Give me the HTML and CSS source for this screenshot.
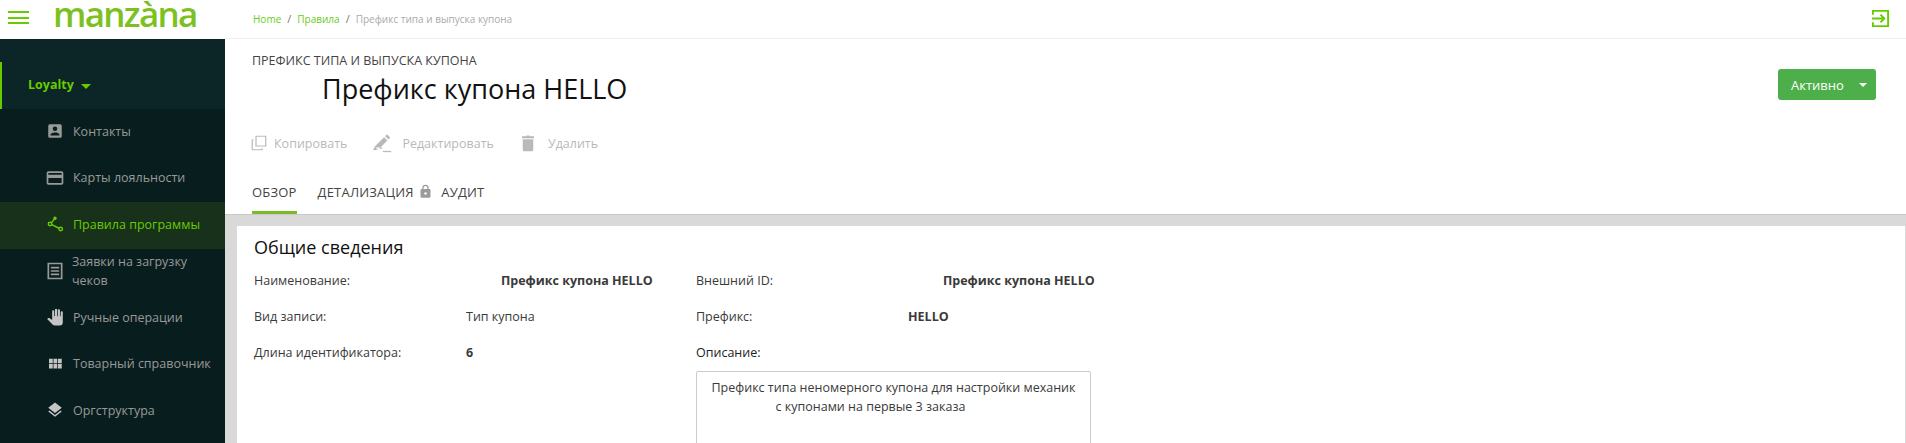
FILE: index.html
```html
<!DOCTYPE html>
<html lang="ru">
<head>
    <meta charset="UTF-8">
    <title>Префикс купона HELLO - Manzana</title>
    <link rel="stylesheet" href="styles.css">
</head>
<body>

    <!-- Sidebar -->
    <aside class="sidebar">
        <div class="brand">
            <div class="burger"><span></span><span></span><span></span></div>
            <div class="logo">manzàna</div>
        </div>
        <nav class="menu">
            <div class="menu-head">Loyalty <i class="caret"></i></div>
            <ul class="menu-list">
                <li class="menu-item">
                    <svg class="menu-icon small" viewBox="0 0 24 24"><path d="M3 5v14a2 2 0 0 0 2 2h14a2 2 0 0 0 2-2V5a2 2 0 0 0-2-2H5a2 2 0 0 0-2 2zm12 4a3 3 0 1 1-6 0 3 3 0 0 1 6 0zm-9 8c0-2 4-3.100 6-3.100s6 1.100 6 3.100v1H6v-1z"/></svg>
                    <span>Контакты</span>
                </li>
                <li class="menu-item">
                    <svg class="menu-icon" viewBox="0 0 24 24"><path d="M20 4H4a2 2 0 0 0-2 2v12a2 2 0 0 0 2 2h16a2 2 0 0 0 2-2V6a2 2 0 0 0-2-2zm0 14H4v-6h16v6zm0-10H4V6h16v2z"/></svg>
                    <span>Карты лояльности</span>
                </li>
                <li class="menu-item active">
                    <svg class="menu-icon smaller" viewBox="0 0 24 24" fill="none" stroke="currentColor" stroke-width="2"><circle cx="5" cy="12" r="2.500" fill="none"/><circle cx="12" cy="4" r="1.500"/><circle cx="20" cy="19" r="2.500" fill="none"/><path d="M7 10.500 11 5M7.500 13l10 5" fill="none"/></svg>
                    <span>Правила программы</span>
                </li>
                <li class="menu-item two-lines">
                    <svg class="menu-icon" viewBox="0 0 24 24"><path d="M3 2h18v20H3V2zm2 2v16h14V4H5zm2 3h10v2H7V7zm0 4h10v2H7v-2zm0 4h10v2H7v-2z"/></svg>
                    <span>Заявки на загрузку чеков</span>
                </li>
                <li class="menu-item">
                    <svg class="menu-icon smaller light" viewBox="0 0 24 24"><path d="M23 5.500V20c0 2.200-1.800 4-4 4h-7.300c-1.080 0-2.100-.43-2.850-1.190L1 14.830s1.260-1.230 1.300-1.250c.22-.19.490-.29.790-.29.220 0 .42.060.600.160.040.010 4.310 2.460 4.310 2.460V4c0-.83.670-1.500 1.500-1.500S11 3.170 11 4v7h1V1.500c0-.83.670-1.500 1.500-1.500S15 .67 15 1.500V11h1V2.500c0-.83.670-1.500 1.500-1.500s1.500.67 1.500 1.500V11h1V5.500c0-.83.670-1.500 1.500-1.500s1.500.67 1.500 1.500z"/></svg>
                    <span>Ручные операции</span>
                </li>
                <li class="menu-item">
                    <svg class="menu-icon small light" viewBox="0 0 24 24"><path d="M4 11h5V5H4v6zm0 7h5v-6H4v6zm6 0h5v-6h-5v6zm6 0h5v-6h-5v6zm-6-7h5V5h-5v6zm6-6v6h5V5h-5z"/></svg>
                    <span>Товарный справочник</span>
                </li>
                <li class="menu-item">
                    <svg class="menu-icon small light" viewBox="0 0 24 24"><path d="M11.990 18.540l-7.370-5.730L3 14.070l9 7 9-7-1.630-1.270-7.380 5.740zM12 16l7.360-5.730L21 9l-9-7-9 7 1.630 1.270L12 16z"/></svg>
                    <span>Оргструктура</span>
                </li>
            </ul>
        </nav>
    </aside>

    <main class="main">
        <!-- Top bar -->
        <div class="topbar">
            <div class="breadcrumbs">
                <a href="#">Home</a><em>/</em><a href="#">Правила</a><em>/</em><span>Префикс типа и выпуска купона</span>
            </div>
            <svg class="exit-icon" viewBox="0 0 20 20" fill="none" stroke="#66cc00" stroke-width="2"><path d="M2 6V2h16v16H2v-4"/><path d="M1 10h13M10 6l4 4-4 4"/></svg>
        </div>

        <!-- Page header -->
        <section class="page-head">
            <div class="head-row">
                <div>
                    <div class="record-type">Префикс типа и выпуска купона</div>
                    <h1>Префикс купона HELLO</h1>
                </div>
                <div class="status-btn"><span>Активно</span><i class="caret"></i></div>
            </div>
            <div class="actions">
                <div class="action">
                    <svg viewBox="0 0 24 24" fill="none" stroke="currentColor" stroke-width="1.600"><path d="M8 3h13v13H8z"/><path d="M5 8H3v13h13v-2"/></svg>
                    <span>Копировать</span>
                </div>
                <div class="action">
                    <svg viewBox="0 0 24 24" fill="currentColor"><path d="M2 17.500V21h.1l10.800-2.600-1-1zM3 16.500 14.500 5l4 4L7.500 20zM15.700 3.800l1.600-1.600a1 1 0 0 1 1.400 0l2.600 2.600a1 1 0 0 1 0 1.400l-1.600 1.600z"/><path d="M13 21.500h10v1.500H13z"/></svg>
                    <span>Редактировать</span>
                </div>
                <div class="action">
                    <svg viewBox="0 0 24 24" fill="currentColor"><path d="M5 7h14v14a2 2 0 0 1-2 2H7a2 2 0 0 1-2-2V7zM19 3h-4l-1-1h-4L9 3H4v2.500h16V3z"/></svg>
                    <span>Удалить</span>
                </div>
            </div>
            <div class="tabs">
                <div class="tab current">Обзор</div>
                <div class="tab">Детализация
                    <svg viewBox="0 0 24 24" fill="#9b9b9b"><path d="M18 8h-1V6A5 5 0 0 0 7 6v2H6a2 2 0 0 0-2 2v10a2 2 0 0 0 2 2h12a2 2 0 0 0 2-2V10a2 2 0 0 0-2-2zM9 6a3 3 0 0 1 6 0v2H9V6zm3 11a2 2 0 1 1 0-4 2 2 0 0 1 0 4z"/></svg>
                </div>
                <div class="tab">Аудит</div>
            </div>
        </section>

        <!-- Card -->
        <section class="content">
            <div class="card">
                <h2>Общие сведения</h2>
                <div class="fields">
                    <div class="field"><label>Наименование:</label><b class="shift">Префикс купона HELLO</b></div>
                    <div class="field"><label>Внешний ID:</label><b class="shift">Префикс купона HELLO</b></div>
                    <div class="field"><label>Вид записи:</label><span>Тип купона</span></div>
                    <div class="field"><label>Префикс:</label><b>HELLO</b></div>
                    <div class="field"><label>Длина идентификатора:</label><b>6</b></div>
                    <div class="field-block">
                        <label>Описание:</label>
                        <div class="note">Префикс типа неномерного купона для настройки механик<br><i class="gap-left"></i>с купонами на первые 3 заказа<i class="gap-right"></i></div>
                    </div>
                </div>
            </div>
        </section>
    </main>

</body>
</html>
```

FILE: styles.css
```css
/* Global Styles */
* {
    margin: 0;
    padding: 0;
    box-sizing: border-box;
}

html, body {
    height: 443px;
    overflow: hidden;
}

body {
    display: flex;
    font-family: 'Open Sans', sans-serif;
    font-size: 12.500px;
    color: #3a3a3a;
    background-color: #fff;
}

/* Sidebar */
.sidebar {
    width: 225px;
    flex-shrink: 0;
    background-color: #081e1e;
}

.brand {
    height: 39px;
    background-color: #fff;
    display: flex;
    align-items: flex-start;
    padding-left: 8px;
}

.burger {
    width: 21px;
    display: flex;
    flex-direction: column;
    gap: 3.500px;
    margin-top: 11px;
    margin-right: 24px;
}

.burger span {
    height: 2px;
    background-color: #66cc00;
}

.logo {
    font-size: 35px;
    font-weight: 600;
    line-height: 27px;
    letter-spacing: -1.700px;
    color: #7dc11f;
}

.menu {
    background-color: #0c2526;
    height: 404px;
}

.menu-head {
    position: relative;
    top: 23px;
    height: 47px;
    display: flex;
    align-items: center;
    gap: 7px;
    padding-left: 26px;
    padding-bottom: 2px;
    border-left: 2px solid #66cc00;
    font-size: 12.500px;
    font-weight: 700;
    color: #66cc00;
}

.caret {
    display: inline-block;
    width: 0;
    height: 0;
    border-left: 5px solid transparent;
    border-right: 5px solid transparent;
    border-top: 5px solid currentColor;
    margin-top: 3px;
}

.menu-list {
    list-style: none;
    background-color: #081e1e;
    margin-top: 23px;
    height: 334px;
}

.menu-item {
    height: 46.500px;
    display: flex;
    align-items: center;
    padding-left: 45px;
    padding-bottom: 2px;
    color: #999;
}

.menu-item span {
    line-height: 19px;
    width: 145px;
    white-space: nowrap;
}

.menu-item.two-lines span {
    white-space: normal;
    margin-left: -1px;
}

.menu-icon {
    width: 20px;
    height: 20px;
    fill: currentColor;
    margin-right: 8px;
    flex-shrink: 0;
}

.menu-icon.small {
    padding: 1px;
}

.menu-icon.smaller {
    padding: 1.500px;
}

.menu-icon.light {
    color: #c4c4c4;
}

.menu-item.active {
    background-color: #18311a;
    color: #66cc00;
}

/* Main */
.main {
    flex: 1;
    min-width: 0;
}

.topbar {
    height: 39px;
    border-bottom: 1px solid #f1f1f1;
    display: flex;
    align-items: center;
    justify-content: space-between;
    padding: 0 16px 2px 28px;
}

.breadcrumbs {
    font-size: 10px;
    color: #aaa;
}

.breadcrumbs a {
    color: #66cc22;
    text-decoration: none;
}

.breadcrumbs em {
    font-style: normal;
    color: #777;
    font-size: 11px;
    margin: 0 6px;
}

.exit-icon {
    width: 19px;
    height: 19px;
}

.page-head {
    height: 176px;
    padding: 0 27px;
    border-bottom: 1px solid #c8c8c8;
}

.head-row {
    display: flex;
    justify-content: space-between;
    align-items: flex-start;
    height: 85px;
    padding-top: 13px;
}

.record-type {
    font-size: 12.500px;
    line-height: 17px;
    text-transform: uppercase;
    color: #444;
}

h1 {
    font-size: 27px;
    font-weight: 400;
    line-height: 33px;
    color: #111;
    margin-left: 70px;
    margin-top: 3px;
}

.status-btn {
    margin-top: 17px;
    margin-right: 3px;
    width: 98px;
    height: 31px;
    background-color: #4caf4a;
    border-radius: 3px;
    color: #fff;
    font-size: 13px;
    display: flex;
    align-items: center;
    justify-content: space-between;
    padding: 0 9px 0 13px;
}

.status-btn .caret {
    border-left-width: 4px;
    border-right-width: 4px;
    border-top-width: 4px;
    margin-top: 0;
}

.actions {
    display: flex;
    gap: 25px;
    height: 48px;
    padding-top: 5px;
    margin-left: -2px;
}

.action {
    display: flex;
    align-items: center;
    height: 28px;
    gap: 6px;
    color: #b9b9b9;
}

.action svg {
    width: 18px;
    height: 18px;
}

.action:nth-child(2) svg {
    width: 20px;
    height: 20px;
    margin-right: 4px;
}

.action:nth-child(3) svg {
    margin-right: 5px;
}

.tabs {
    display: flex;
    gap: 21px;
    height: 42px;
}

.tab {
    height: 42px;
    display: flex;
    align-items: center;
    gap: 4.500px;
    padding-bottom: 3px;
    font-size: 13px;
    letter-spacing: 0.200px;
    text-transform: uppercase;
    color: #444;
}

.tab + .tab + .tab {
    margin-left: -13px;
}

.tab svg {
    width: 15px;
    height: 15px;
}

.tab.current {
    padding-bottom: 0;
    border-bottom: 3px solid #7dba28;
}

/* Card */
.content {
    height: 228px;
    background-color: #d9d9d9;
    padding: 11px 1px 0 12px;
}

.card {
    height: 217px;
    background-color: #fff;
    padding: 10px 17px 0;
    overflow: hidden;
}

h2 {
    font-size: 18px;
    font-weight: 400;
    line-height: 22px;
    color: #111;
    margin-bottom: 14px;
}

.fields {
    display: grid;
    grid-template-columns: 442px 1fr;
    grid-auto-rows: 36px;
}

.field {
    display: flex;
    line-height: 18px;
}

.field label {
    width: 212px;
}

.field b {
    font-weight: 700;
}

.field b.shift {
    margin-left: 35px;
}

.field-block label {
    display: block;
    line-height: 18px;
    color: #222;
}

.note {
    margin-top: 9px;
    width: 395px;
    height: 100px;
    border: 1px solid #ccc;
    border-radius: 2px;
    padding: 6px 8px;
    line-height: 19px;
    text-align: center;
}

.gap-left {
    display: inline-block;
    width: 64px;
}

.gap-right {
    display: inline-block;
    width: 110px;
}
```
